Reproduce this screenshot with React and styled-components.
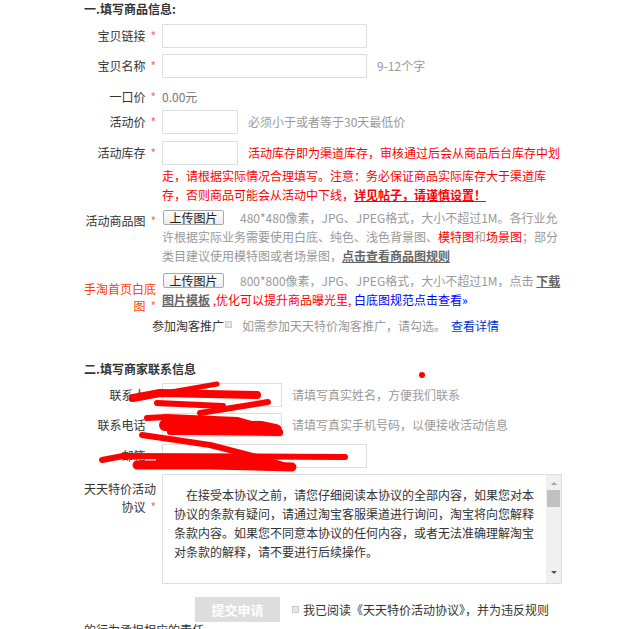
import React from 'react'
import styled, { createGlobalStyle } from 'styled-components'

const GlobalStyle = createGlobalStyle`
  html, body {
    margin: 0;
    padding: 0;
    background: #fff;
  }
  body {
    font-family: "Microsoft YaHei", "Noto Sans CJK SC", "Noto Sans", sans-serif;
    font-size: 12px;
    color: #333;
  }
`

const Page = styled.div`
  position: relative;
  width: 623px;
  height: 629px;
  overflow: hidden;
  padding-left: 84px;
  box-sizing: border-box;
`

const Heading = styled.h3`
  margin: ${p => p.$mt || 0}px 0 0;
  font-size: 12px;
  font-weight: bold;
  line-height: 18px;
  color: #333;
`

const Row = styled.div`
  display: flex;
  margin-top: ${p => p.$mt || 0}px;
`

const Label = styled.div`
  flex: none;
  width: 72px;
  margin-right: 6px;
  padding-top: ${p => p.$pt || 0}px;
  text-align: right;
  line-height: ${p => p.$lh || 24}px;
  color: ${p => (p.$red ? '#ff4000' : '#333')};
`

const Star = styled.span`
  margin-left: 5px;
  color: #f66;
  visibility: ${p => (p.$hidden ? 'hidden' : 'visible')};
`

const Content = styled.div`
  flex: none;
  width: 400px;
`

const Inline = styled.div`
  display: flex;
  align-items: center;
  gap: 10px;
  line-height: 24px;
  white-space: nowrap;
`

const Input = styled.input`
  width: ${p => p.$w}px;
  height: 24px;
  margin: 0;
  padding: 0 4px;
  box-sizing: border-box;
  border: 1px solid #ddd;
  background: #fff;
  outline: none;
`

const Hint = styled.span`
  color: #999;
`

const Price = styled.span`
  color: #777;
  line-height: 24px;
`

const Red = styled.span`
  color: #f00;
`

const Blue = styled.span`
  color: ${p => (p.$dark ? '#0033cc' : '#0000ff')};
  margin-left: ${p => p.$ml || 0}px;
`

const Strong = styled.a`
  font-weight: bold;
  text-decoration: underline;
  color: ${p => p.$color || '#666'};
`

const Lines = styled.div`
  margin-top: ${p => p.$mt || 0}px;
  line-height: ${p => p.$lh || 19}px;
  white-space: nowrap;
  color: ${p => p.$color || '#999'};
`

const Line = styled.div`
  display: flex;
  align-items: center;
  height: ${p => p.$lh || 19}px;
`

const UploadButton = styled.button`
  flex: none;
  width: 61px;
  height: 15px;
  margin: 0 16px 0 1px;
  padding: 0;
  border: 1px solid #a9a9a9;
  border-radius: 2px;
  background: linear-gradient(#fefefe, #ececec);
  font-family: inherit;
  font-size: 12px;
  line-height: 12px;
  color: #222;
`

const TaokeRow = styled.div`
  display: flex;
  align-items: center;
  margin-top: ${p => p.$mt || 0}px;
  padding-left: 68px;
  line-height: 18px;
  white-space: nowrap;
`

const TinyBox = styled.span`
  flex: none;
  width: 5px;
  height: 5px;
  margin: ${p => p.$m || '0'};
  border: 1px solid #ccc;
  background: #e6e6e6;
`

const Agreement = styled.div`
  display: flex;
  width: 400px;
  height: 110px;
  box-sizing: border-box;
  border: 1px solid #ddd;
  background: #fff;
  overflow: hidden;
`

const AgreementText = styled.div`
  flex: 1;
  padding: 10px 11px;
  line-height: 19px;
  color: #333;
  white-space: nowrap;
  overflow: hidden;
`

const Indent = styled.div`
  text-indent: 12px;
`

const ScrollTrack = styled.div`
  flex: none;
  width: 15px;
  background: #f0f0f0;
  display: flex;
  flex-direction: column;
  align-items: center;
`

const Arrow = styled.div`
  width: 0;
  height: 0;
  margin-top: ${p => p.$mt || 0}px;
  border-left: 3px solid transparent;
  border-right: 3px solid transparent;
  ${p => (p.$down
    ? 'border-top: 3px solid #505050;'
    : 'border-bottom: 3px solid #a3a3a3;')}
`

const Thumb = styled.div`
  width: 13px;
  height: 17px;
  margin-top: 5px;
  background: #c1c1c1;
`

const SubmitRow = styled.div`
  display: flex;
  align-items: center;
  margin-top: ${p => p.$mt || 0}px;
  padding-left: 111px;
  white-space: nowrap;
  color: #333;
`

const SubmitButton = styled.button`
  width: 85px;
  height: 25px;
  padding: 0;
  border: none;
  background: #ddd;
  color: #fff;
  font-family: inherit;
  font-size: 13px;
  font-weight: bold;
`

const Tail = styled.div`
  line-height: 16px;
  color: #333;
`

const Overlay = styled.svg`
  position: absolute;
  left: 0;
  top: 0;
  pointer-events: none;
`

const scribbles = [
  { d: 'M131 399 L217 384', w: 5 },
  { d: 'M133 398 L160 393 L257 395', w: 8 },
  { d: 'M157 403 L223 406', w: 6 },
  { d: 'M200 413 L268 402', w: 6 },
  { d: 'M147 418 L167 417 L237 420 L280 432', w: 6 },
  { d: 'M165 425 L262 427 L276 430', w: 12 },
  { d: 'M170 432 L280 433', w: 6 },
  { d: 'M142 435 L210 445 L257 457 L290 467', w: 6 },
  { d: 'M102 460 L123 456 L345 457', w: 6 },
  { d: 'M137 465 L210 465 L292 467', w: 9 },
  { d: 'M160 460 L270 461', w: 8 },
]

const App = () => (
  <Page>
    <GlobalStyle />
    <Heading $mt={0}>一.填写商品信息:</Heading>

    <Row $mt={6}>
      <Label>宝贝链接<Star>*</Star></Label>
      <Content><Inline><Input $w={205} readOnly /></Inline></Content>
    </Row>

    <Row $mt={6}>
      <Label>宝贝名称<Star>*</Star></Label>
      <Content>
        <Inline><Input $w={205} readOnly /><Hint>9-12个字</Hint></Inline>
      </Content>
    </Row>

    <Row $mt={7}>
      <Label>一口价<Star>*</Star></Label>
      <Content><Price>0.00元</Price></Content>
    </Row>

    <Row $mt={1}>
      <Label>活动价<Star>*</Star></Label>
      <Content>
        <Inline><Input $w={76} readOnly /><Hint>必须小于或者等于30天最低价</Hint></Inline>
      </Content>
    </Row>

    <Row $mt={7}>
      <Label>活动库存<Star>*</Star></Label>
      <Content>
        <Inline>
          <Input $w={76} readOnly />
          <Red>活动库存即为渠道库存，审核通过后会从商品后台库存中划</Red>
        </Inline>
        <Lines $mt={1} $color="#f00">
          <div>走，请根据实际情况合理填写。注意：务必保证商品实际库存大于渠道库</div>
          <div>存，否则商品可能会从活动中下线，<Strong $color="#f00">详见帖子，请谨慎设置！</Strong></div>
        </Lines>
      </Content>
    </Row>

    <Row $mt={4}>
      <Label $lh={19} $pt={3}>活动商品图<Star>*</Star></Label>
      <Content>
        <Lines>
          <Line><UploadButton>上传图片</UploadButton>480*480像素，JPG、JPEG格式，大小不超过1M。各行业允</Line>
          <div>许根据实际业务需要使用白底、纯色、浅色背景图、<Red>模特图</Red>和<Red>场景图</Red>；部分</div>
          <div>类目建议使用模特图或者场景图，<Strong>点击查看商品图规则</Strong></div>
        </Lines>
      </Content>
    </Row>

    <Row $mt={6}>
      <Label $red $lh={17} $pt={9}>手淘首页白底图<Star>*</Star></Label>
      <Content>
        <Lines>
          <Line>
            <UploadButton>上传图片</UploadButton>
            800*800像素，JPG、JPEG格式，大小不超过1M，点击&nbsp;<Strong>下载</Strong>
          </Line>
          <div>
            <Strong>图片模板</Strong><Red> ,优化可以提升商品曝光里, </Red>
            <Blue>白底图规范点击查看»</Blue>
          </div>
        </Lines>
      </Content>
    </Row>

    <TaokeRow $mt={3}>
      参加淘客推广
      <TinyBox $m="0 10px 3px 1px" />
      <Hint>如需参加天天特价淘客推广，请勾选。</Hint>
      <Blue $dark $ml={5}>查看详情</Blue>
    </TaokeRow>

    <Heading $mt={25}>二.填写商家联系信息</Heading>

    <Row $mt={5}>
      <Label>联系人<Star $hidden>*</Star></Label>
      <Content>
        <Inline><Input $w={120} readOnly /><Hint>请填写真实姓名，方便我们联系</Hint></Inline>
      </Content>
    </Row>

    <Row $mt={6}>
      <Label>联系电话<Star $hidden>*</Star></Label>
      <Content>
        <Inline><Input $w={120} readOnly /><Hint>请填写真实手机号码，以便接收活动信息</Hint></Inline>
      </Content>
    </Row>

    <Row $mt={7}>
      <Label>邮箱<Star $hidden>*</Star></Label>
      <Content><Inline><Input $w={205} readOnly /></Inline></Content>
    </Row>

    <Row $mt={6}>
      <Label $lh={18} $pt={6}>天天特价活动协议<Star>*</Star></Label>
      <Content>
        <Agreement>
          <AgreementText>
            <Indent>在接受本协议之前，请您仔细阅读本协议的全部内容，如果您对本</Indent>
            <div>协议的条款有疑问，请通过淘宝客服渠道进行询问，淘宝将向您解释</div>
            <div>条款内容。如果您不同意本协议的任何内容，或者无法准确理解淘宝</div>
            <div>对条款的解释，请不要进行后续操作。</div>
            <div>&nbsp;</div>
            <div>二.天天特价活动协议</div>
          </AgreementText>
          <ScrollTrack>
            <Arrow $mt={7} />
            <Thumb />
            <Arrow $down $mt={64} />
          </ScrollTrack>
        </Agreement>
      </Content>
    </Row>

    <SubmitRow $mt={13}>
      <SubmitButton>提交申请</SubmitButton>
      <TinyBox $m="0 4px 0 12px" />
      我已阅读《天天特价活动协议》，并为违反规则
    </SubmitRow>
    <Tail>的行为承担相应的责任</Tail>

    <Overlay width="623" height="629" viewBox="0 0 623 629">
      {scribbles.map((s, i) => (
        <path key={i} d={s.d} stroke="#ff0000" strokeWidth={s.w} fill="none"
          strokeLinecap="round" strokeLinejoin="round" />
      ))}
      <circle cx="422" cy="375" r="3" fill="#ff0000" />
    </Overlay>
  </Page>
)

export default App
